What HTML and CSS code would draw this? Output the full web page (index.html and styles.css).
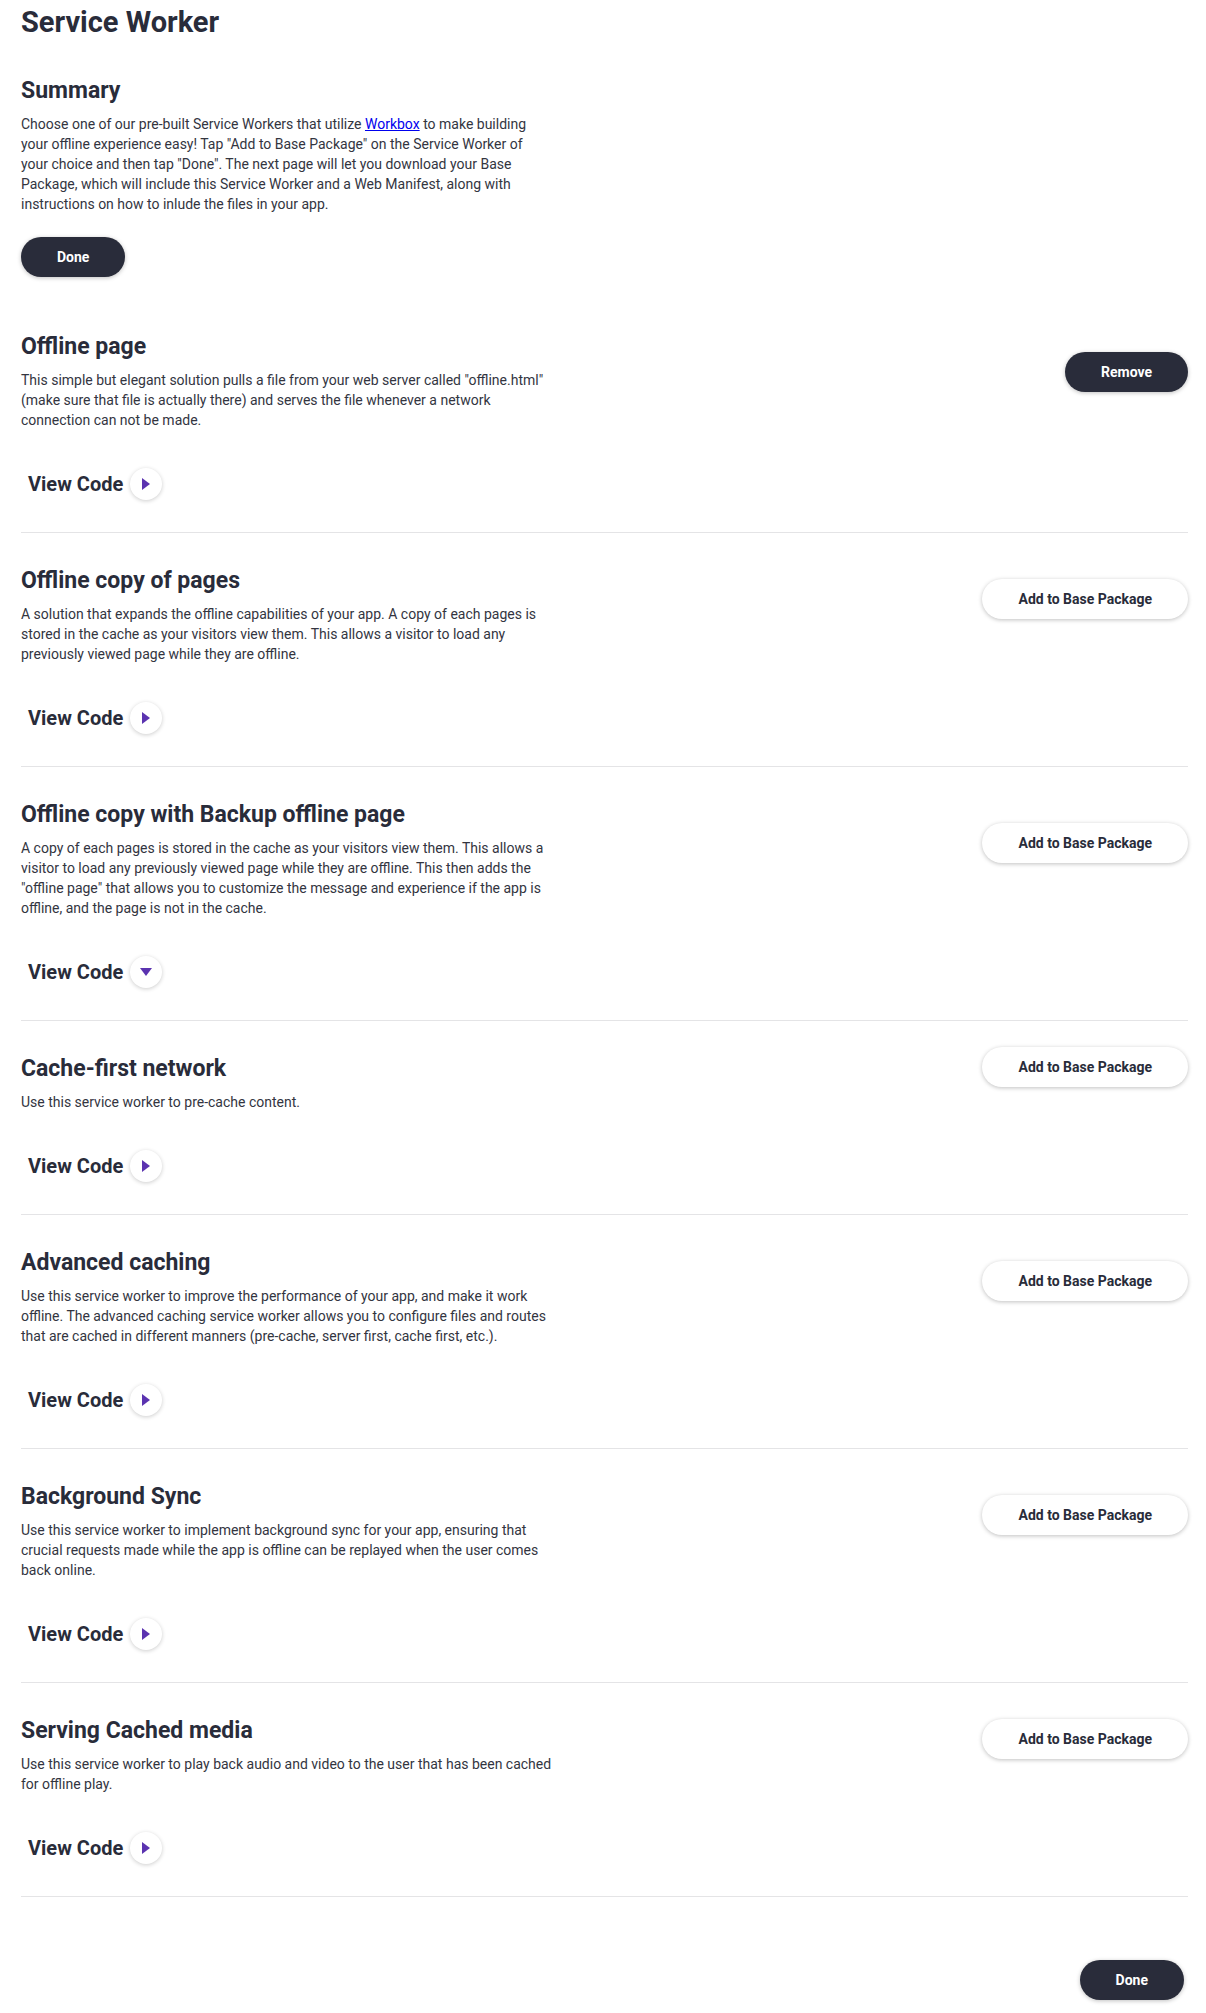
FILE: index.html
```html
<!DOCTYPE html>
<html lang="en">
<head>
<meta charset="utf-8">
<title>Service Worker</title>
<link rel="stylesheet" href="styles.css">
</head>
<body>
<main class="page">
  <h1 class="page-title">Service Worker</h1>

  <section class="summary">
    <h2 class="heading">Summary</h2>
    <p class="text summary-text">Choose one of our pre-built Service Workers that utilize <a href="#" class="link">Workbox</a> to make building your offline experience easy! Tap "Add to Base Package" on the Service Worker of your choice and then tap "Done". The next page will let you download your Base Package, which will include this Service Worker and a Web Manifest, along with instructions on how to inlude the files in your app.</p>
    <button class="btn btn-dark btn-done">Done</button>
  </section>

  <section class="sw">
    <div class="sw-row">
      <div class="sw-info">
        <h2 class="heading sw-heading">Offline page</h2>
        <p class="text">This simple but elegant solution pulls a file from your web server called "offline.html" (make sure that file is actually there) and serves the file whenever a network connection can not be made.</p>
      </div>
      <button class="btn btn-dark btn-remove">Remove</button>
    </div>
    <div class="view-code">
      <span class="view-label">View Code</span>
      <span class="toggle"><svg width="10" height="12" viewBox="0 0 10 12"><path d="M1 0 L9 6 L1 12 Z" fill="#5b33b0"/></svg></span>
    </div>
  </section>

  <section class="sw">
    <div class="sw-row">
      <div class="sw-info">
        <h2 class="heading sw-heading">Offline copy of pages</h2>
        <p class="text">A solution that expands the offline capabilities of your app. A copy of each pages is stored in the cache as your visitors view them. This allows a visitor to load any previously viewed page while they are offline.</p>
      </div>
      <button class="btn btn-light">Add to Base Package</button>
    </div>
    <div class="view-code">
      <span class="view-label">View Code</span>
      <span class="toggle"><svg width="10" height="12" viewBox="0 0 10 12"><path d="M1 0 L9 6 L1 12 Z" fill="#5b33b0"/></svg></span>
    </div>
  </section>

  <section class="sw">
    <div class="sw-row">
      <div class="sw-info">
        <h2 class="heading sw-heading">Offline copy with Backup offline page</h2>
        <p class="text">A copy of each pages is stored in the cache as your visitors view them. This allows a visitor to load any previously viewed page while they are offline. This then adds the "offline page" that allows you to customize the message and experience if the app is offline, and the page is not in the cache.</p>
      </div>
      <button class="btn btn-light">Add to Base Package</button>
    </div>
    <div class="view-code">
      <span class="view-label">View Code</span>
      <span class="toggle"><svg width="12" height="10" viewBox="0 0 12 10"><path d="M0 1 L12 1 L6 9 Z" fill="#5b33b0"/></svg></span>
    </div>
  </section>

  <section class="sw">
    <div class="sw-row">
      <div class="sw-info">
        <h2 class="heading sw-heading">Cache-first network</h2>
        <p class="text">Use this service worker to pre-cache content.</p>
      </div>
      <button class="btn btn-light">Add to Base Package</button>
    </div>
    <div class="view-code">
      <span class="view-label">View Code</span>
      <span class="toggle"><svg width="10" height="12" viewBox="0 0 10 12"><path d="M1 0 L9 6 L1 12 Z" fill="#5b33b0"/></svg></span>
    </div>
  </section>

  <section class="sw">
    <div class="sw-row">
      <div class="sw-info">
        <h2 class="heading sw-heading">Advanced caching</h2>
        <p class="text">Use this service worker to improve the performance of your app, and make it work offline. The advanced caching service worker allows you to configure files and routes that are cached in different manners (pre-cache, server first, cache first, etc.).</p>
      </div>
      <button class="btn btn-light">Add to Base Package</button>
    </div>
    <div class="view-code">
      <span class="view-label">View Code</span>
      <span class="toggle"><svg width="10" height="12" viewBox="0 0 10 12"><path d="M1 0 L9 6 L1 12 Z" fill="#5b33b0"/></svg></span>
    </div>
  </section>

  <section class="sw">
    <div class="sw-row">
      <div class="sw-info">
        <h2 class="heading sw-heading">Background Sync</h2>
        <p class="text">Use this service worker to implement background sync for your app, ensuring that crucial requests made while the app is offline can be replayed when the user comes back online.</p>
      </div>
      <button class="btn btn-light">Add to Base Package</button>
    </div>
    <div class="view-code">
      <span class="view-label">View Code</span>
      <span class="toggle"><svg width="10" height="12" viewBox="0 0 10 12"><path d="M1 0 L9 6 L1 12 Z" fill="#5b33b0"/></svg></span>
    </div>
  </section>

  <section class="sw">
    <div class="sw-row">
      <div class="sw-info">
        <h2 class="heading sw-heading">Serving Cached media</h2>
        <p class="text">Use this service worker to play back audio and video to the user that has been cached for offline play.</p>
      </div>
      <button class="btn btn-light">Add to Base Package</button>
    </div>
    <div class="view-code">
      <span class="view-label">View Code</span>
      <span class="toggle"><svg width="10" height="12" viewBox="0 0 10 12"><path d="M1 0 L9 6 L1 12 Z" fill="#5b33b0"/></svg></span>
    </div>
  </section>

  <div class="footer-actions">
    <button class="btn btn-dark btn-done-bottom">Done</button>
  </div>
</main>
</body>
</html>
```

FILE: styles.css
```css
* {
  box-sizing: border-box;
}

html, body {
  margin: 0;
  padding: 0;
  background: #ffffff;
}

body {
  font-family: Roboto, "Liberation Sans", sans-serif;
  color: #292c3a;
}

.page {
  padding: 0 18px 14px 21px;
}

.page-title {
  margin: 4px 0 0;
  font-size: 29px;
  line-height: 36px;
  font-weight: 700;
  color: #292c3a;
}

.heading {
  margin: 0;
  font-size: 23px;
  line-height: 28px;
  font-weight: 700;
  color: #292c3a;
}

.summary {
  margin-top: 37px;
}

.text {
  margin: 9px 0 0;
  max-width: 540px;
  font-size: 14px;
  line-height: 20px;
  color: #33353f;
}

.summary-text {
  max-width: 515px;
}

.link {
  color: #0000ee;
  text-decoration: underline;
}

.btn {
  height: 40px;
  padding: 0 36px;
  border: none;
  border-radius: 20px;
  font-family: Roboto, "Liberation Sans", sans-serif;
  font-size: 14px;
  font-weight: 700;
  cursor: pointer;
  flex: none;
}

.btn-dark {
  background: #292c3a;
  color: #ffffff;
  box-shadow: 0 1px 4px rgba(0, 0, 0, 0.25);
}

.btn-light {
  background: #ffffff;
  color: #292c3a;
  box-shadow: 0 1px 4px rgba(0, 0, 0, 0.25);
}

.btn-done {
  margin-top: 23px;
}

.sw {
  margin-top: 22px;
  padding-bottom: 32px;
  border-bottom: 1px solid #e4e4e6;
}

.sw + .sw {
  margin-top: 0;
}

.sw-row {
  display: flex;
  align-items: center;
  justify-content: space-between;
}

.sw-info {
  flex: 0 1 540px;
}

.sw-heading {
  margin-top: 34px;
}

.btn-remove {
  margin-top: 15px;
}

.view-code {
  display: flex;
  align-items: center;
  gap: 7px;
  margin-top: 38px;
  padding-left: 7px;
  height: 32px;
}

.view-label {
  font-size: 20px;
  line-height: 32px;
  font-weight: 700;
  color: #292c3a;
}

.toggle {
  width: 32px;
  height: 32px;
  border-radius: 50%;
  background: #ffffff;
  box-shadow: 0 1px 4px rgba(0, 0, 0, 0.2);
  display: flex;
  align-items: center;
  justify-content: center;
}

.footer-actions {
  display: flex;
  justify-content: flex-end;
  margin-top: 63px;
  padding-right: 4px;
}
```
